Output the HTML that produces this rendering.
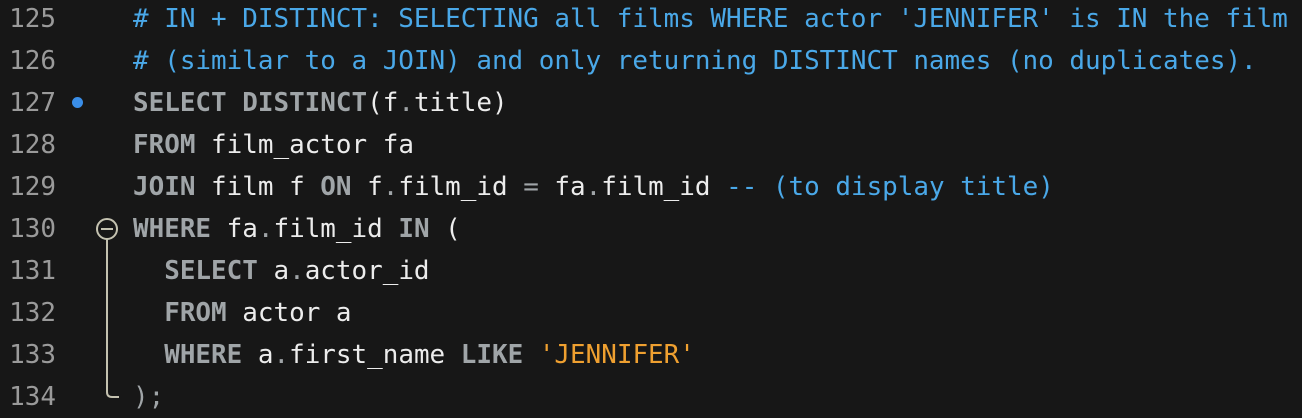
<!DOCTYPE html>
<html><head><style>
html,body{margin:0;padding:0;background:#171717;width:1302px;height:418px;overflow:hidden}
.l{position:absolute;left:0;height:42px;line-height:42px;font-family:"DejaVu Sans Mono","Liberation Mono",monospace;font-size:25.93px;white-space:pre;color:#ececec}
.n{position:absolute;left:8px;width:48px;text-align:right;color:#9a9a9a}
.c{position:absolute;left:133px}
.k{color:#a0a5a8;font-weight:bold}
.m{color:#4aa8e8}
.s{color:#efa030}
.p{color:#a0a5a8}
</style></head><body>
<div class="l" style="top:-2px"><span class="n">125</span><span class="c m"># IN + DISTINCT: SELECTING all films WHERE actor 'JENNIFER' is IN the film</span></div>
<div class="l" style="top:40px"><span class="n">126</span><span class="c m"># (similar to a JOIN) and only returning DISTINCT names (no duplicates).</span></div>
<div class="l" style="top:82px"><span class="n">127</span><span class="c"><span class="k">SELECT DISTINCT</span>(f<span class="p">.</span>title)</span></div>
<div class="l" style="top:124px"><span class="n">128</span><span class="c"><span class="k">FROM</span> film_actor fa</span></div>
<div class="l" style="top:166px"><span class="n">129</span><span class="c"><span class="k">JOIN</span> film f <span class="k">ON</span> f<span class="p">.</span>film_id <span class="p">=</span> fa<span class="p">.</span>film_id <span class="m">-- (to display title)</span></span></div>
<div class="l" style="top:208px"><span class="n">130</span><span class="c"><span class="k">WHERE</span> fa<span class="p">.</span>film_id <span class="k">IN</span> (</span></div>
<div class="l" style="top:250px"><span class="n">131</span><span class="c">  <span class="k">SELECT</span> a<span class="p">.</span>actor_id</span></div>
<div class="l" style="top:292px"><span class="n">132</span><span class="c">  <span class="k">FROM</span> actor a</span></div>
<div class="l" style="top:334px"><span class="n">133</span><span class="c">  <span class="k">WHERE</span> a<span class="p">.</span>first_name <span class="k">LIKE</span> <span class="s">'JENNIFER'</span></span></div>
<div class="l" style="top:376px"><span class="n">134</span><span class="c"><span class="p">);</span></span></div>
<div style="position:absolute;left:72px;top:97px;width:11px;height:11px;border-radius:50%;background:#3a8ee8"></div>
<svg style="position:absolute;left:0;top:0" width="1302" height="418">
<circle cx="107" cy="229" r="10" fill="none" stroke="#c4c2b0" stroke-width="2"/>
<line x1="101" y1="229" x2="113" y2="229" stroke="#c4c2b0" stroke-width="2"/>
<path d="M107 239 V392 Q107 397 112 397 H119" fill="none" stroke="#c4c2b0" stroke-width="2"/>
</svg>
</body></html>
